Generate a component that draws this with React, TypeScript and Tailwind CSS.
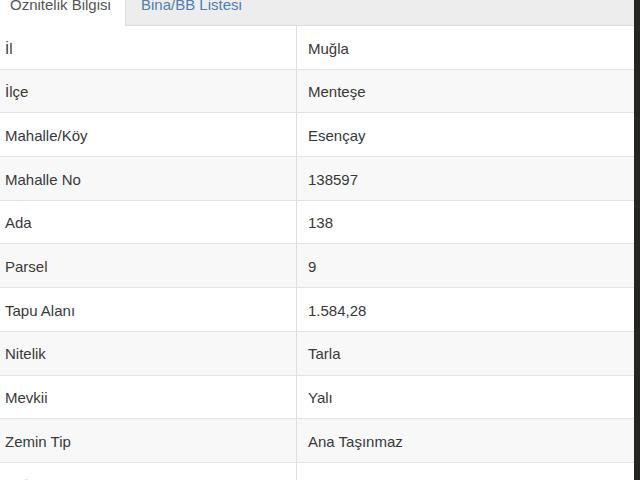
const rows: [string, string][] = [
  ['İl', 'Muğla'],
  ['İlçe', 'Menteşe'],
  ['Mahalle/Köy', 'Esençay'],
  ['Mahalle No', '138597'],
  ['Ada', '138'],
  ['Parsel', '9'],
  ['Tapu Alanı', '1.584,28'],
  ['Nitelik', 'Tarla'],
  ['Mevkii', 'Yalı'],
  ['Zemin Tip', 'Ana Taşınmaz'],
  ['Pafta', 'M21-C-12-B-1'],
]

export default function App() {
  return (
    <div
      className="w-[640px] h-[480px] overflow-hidden flex bg-white text-[15px] text-[#383838]"
      style={{ fontFamily: '"Liberation Sans", Arial, sans-serif' }}
    >
      <div className="w-[634px] flex flex-col">
        {/* Tabs */}
        <div className="h-[26px] flex shrink-0 bg-[#ededed] border-b border-[#dcdcdc]">
          <div className="w-[126px] bg-white border-r border-[#dcdcdc] -mb-px pl-[10px] text-[#555]">
            <div className="-mt-[5px] leading-[20px]">Öznitelik Bilgisi</div>
          </div>
          <div className="pl-[15px] text-[#4f7fae]">
            <div className="-mt-[5px] leading-[20px]">Bina/BB Listesi</div>
          </div>
        </div>

        {/* Attribute table */}
        <div className="flex flex-col">
          {rows.map(([k, v], i) => (
            <div
              key={k}
              className={`h-[43.7px] shrink-0 flex border-b border-[#e2e2e2] pt-[3px] ${
                i % 2 === 1 ? 'bg-[#f8f8f8]' : 'bg-white'
              } ${i === rows.length - 1 ? 'text-[#e4e4e4]' : ''}`}
            >
              <div className="w-[297px] -mt-[3px] border-r border-[#dedede] pl-[5px] pt-[3px] flex items-center">{k}</div>
              <div className="flex-1 pl-[11px] flex items-center">{v}</div>
            </div>
          ))}
        </div>
      </div>
      <div className="flex-1 bg-[#252522]" />
    </div>
  )
}
